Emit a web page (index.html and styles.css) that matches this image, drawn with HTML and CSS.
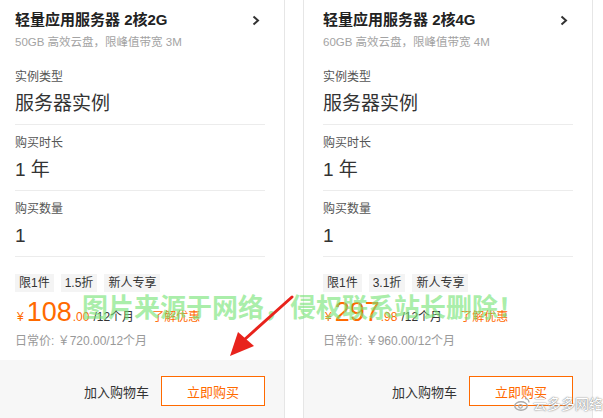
FILE: index.html
```html
<!DOCTYPE html>
<html lang="zh-CN">
<head>
    <meta charset="UTF-8">
    <meta name="viewport" content="width=device-width, initial-scale=1.0">
    <title>轻量应用服务器</title>
    <link rel="stylesheet" href="styles.css">
</head>
<body>
    <div class="cards">
        <div class="card">
            <div class="card-body">
                <div class="head">
                    <div class="title">轻量应用服务器 2核2G</div>
                    <svg class="chevron" width="8" height="11" viewBox="0 0 8 11"><polyline points="1.5,1.5 6,5.5 1.5,9.5" fill="none" stroke="#333" stroke-width="2"/></svg>
                </div>
                <div class="desc">50GB 高效云盘，限峰值带宽 3M</div>
                <div class="field field-first">
                    <div class="label">实例类型</div>
                    <div class="value">服务器实例</div>
                </div>
                <div class="field">
                    <div class="label">购买时长</div>
                    <div class="value">1 年</div>
                </div>
                <div class="field">
                    <div class="label">购买数量</div>
                    <div class="value">1</div>
                </div>
                <div class="tags">
                    <span class="tag">限1件</span>
                    <span class="tag">1.5折</span>
                    <span class="tag">新人专享</span>
                </div>
                <div class="price">
                    <span class="yen">¥</span>
                    <span class="amount">108</span>
                    <span class="cents">.00</span>
                    <span class="period">/12个月</span>
                    <span class="promo">了解优惠</span>
                </div>
                <div class="normal">日常价: ￥720.00/12个月</div>
            </div>
            <div class="card-foot">
                <span class="cart">加入购物车</span>
                <button class="buy">立即购买</button>
            </div>
        </div>

        <div class="card">
            <div class="card-body">
                <div class="head">
                    <div class="title">轻量应用服务器 2核4G</div>
                    <svg class="chevron" width="8" height="11" viewBox="0 0 8 11"><polyline points="1.5,1.5 6,5.5 1.5,9.5" fill="none" stroke="#333" stroke-width="2"/></svg>
                </div>
                <div class="desc">60GB 高效云盘，限峰值带宽 4M</div>
                <div class="field field-first">
                    <div class="label">实例类型</div>
                    <div class="value">服务器实例</div>
                </div>
                <div class="field">
                    <div class="label">购买时长</div>
                    <div class="value">1 年</div>
                </div>
                <div class="field">
                    <div class="label">购买数量</div>
                    <div class="value">1</div>
                </div>
                <div class="tags">
                    <span class="tag">限1件</span>
                    <span class="tag">3.1折</span>
                    <span class="tag">新人专享</span>
                </div>
                <div class="price">
                    <span class="yen">¥</span>
                    <span class="amount">297</span>
                    <span class="cents">.98</span>
                    <span class="period">/12个月</span>
                    <span class="promo">了解优惠</span>
                </div>
                <div class="normal">日常价: ￥960.00/12个月</div>
            </div>
            <div class="card-foot">
                <span class="cart">加入购物车</span>
                <button class="buy">立即购买</button>
            </div>
        </div>
    </div>

    <!-- watermark overlays -->
    <div class="notice">图片来源于网络，侵权联系站长删除！</div>
    <svg class="arrow" width="70" height="70" viewBox="0 0 70 70">
        <line x1="66" y1="3" x2="18" y2="46" stroke="#e8231c" stroke-width="3" stroke-linecap="round"/>
        <polygon points="4,62 12,38 28,52" fill="#e8231c"/>
    </svg>
    <div class="brand">
        <svg width="16" height="14" viewBox="0 0 16 14"><ellipse cx="7" cy="9" rx="6.2" ry="4.2" fill="none" stroke="#aaa" stroke-width="1.4"/><circle cx="6.5" cy="9.3" r="1.8" fill="none" stroke="#aaa" stroke-width="1.2"/><path d="M11 1.5 a4 4 0 0 1 4 4" fill="none" stroke="#aaa" stroke-width="1.3"/></svg>
        <span>云多多网络</span>
    </div>
</body>
</html>
```

FILE: styles.css
```css
/* page */
body {
    margin: 0;
    font-family: "Liberation Sans", "Noto Sans CJK SC", sans-serif;
    color: #333;
    background: #fff;
    overflow: hidden;
}

.cards {
    display: flex;
    gap: 18px;
    margin: -1px 0 0 -5px;
}

.card {
    width: 290px;
    border: 1px solid #e6e6e6;
    box-sizing: border-box;
    background: #fff;
}

.card-body {
    padding: 8px 19px 10px;
}

.head {
    display: flex;
    justify-content: space-between;
    align-items: center;
}

.title {
    font-size: 15px;
    line-height: 24px;
    font-weight: bold;
    color: #222;
}

.chevron {
    margin-right: 5px;
}

.desc {
    margin-top: 1px;
    font-size: 11.5px;
    line-height: 18px;
    color: #a3a3a3;
}

.field {
    padding: 9px 0 6px;
    border-bottom: 1px solid #ececec;
}

.field-first {
    padding-top: 17px;
}

.label {
    font-size: 12px;
    line-height: 18px;
    color: #555;
}

.value {
    margin-top: 4px;
    font-size: 19px;
    line-height: 28px;
    color: #333;
}

.tags {
    display: flex;
    gap: 7px;
    margin-top: 17px;
}

.tag {
    padding: 0 4px;
    font-size: 12px;
    line-height: 18px;
    background: #f4f4f4;
    color: #333;
}

.price {
    display: flex;
    align-items: baseline;
    margin-top: 5px;
    height: 30px;
    color: #ff6a00;
}

.yen {
    font-size: 12px;
    margin: 0 3px 0 2px;
}

.amount {
    font-size: 27px;
    line-height: 30px;
}

.cents {
    font-size: 12px;
    margin-left: 1px;
}

.period {
    font-size: 12px;
    margin-left: 4px;
    color: #333;
}

.promo {
    font-size: 12px;
    margin-left: 18px;
}

.normal {
    margin-top: 5px;
    font-size: 12px;
    line-height: 18px;
    color: #999;
}

.card-foot {
    display: flex;
    justify-content: flex-end;
    align-items: center;
    gap: 12px;
    padding: 16px 19px;
    background: #f7f7f7;
}

.cart {
    font-size: 13px;
    color: #333;
}

.buy {
    width: 104px;
    height: 30px;
    border: 1px solid #ff6a00;
    background: #fff;
    color: #ff6a00;
    font-family: inherit;
    font-size: 13px;
}

/* overlays */
.notice {
    position: absolute;
    left: 82px;
    top: 291px;
    font-size: 26px;
    line-height: 34px;
    font-weight: bold;
    color: rgba(120, 228, 120, 0.65);
    white-space: nowrap;
}

.arrow {
    position: absolute;
    left: 226px;
    top: 294px;
}

.brand {
    position: absolute;
    left: 514px;
    top: 394px;
    display: flex;
    align-items: center;
    gap: 3px;
    font-size: 14px;
    line-height: 20px;
    color: #fff;
    text-shadow: 0 0 1px #777, 0 0 2px #999;
}
```
